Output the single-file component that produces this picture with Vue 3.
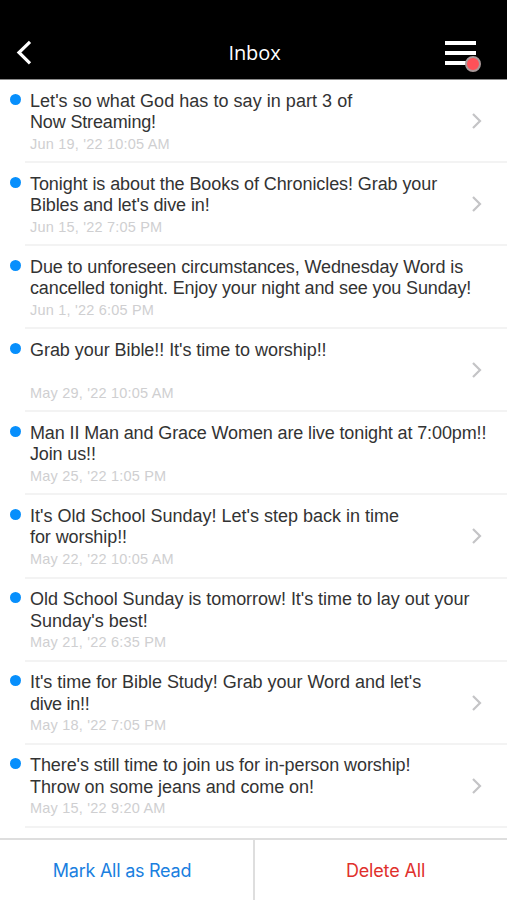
<script setup>
// each line is [text, tracking in px]
const messages = [
  { lines: [["Let's so what God has to say in part 3 of", 0.04], ['Now Streaming!', -0.15]], date: "Jun 19, '22 10:05 AM", link: true },
  { lines: [['Tonight is about the Books of Chronicles! Grab your', -0.08], ["Bibles and let's dive in!", -0.12]], date: "Jun 15, '22 7:05 PM", link: true },
  { lines: [['Due to unforeseen circumstances, Wednesday Word is', -0.11], ['cancelled tonight. Enjoy your night and see you Sunday!', -0.13]], date: "Jun 1, '22 6:05 PM", link: false },
  { lines: [["Grab your Bible!! It's time to worship!!", -0.05]], date: "May 29, '22 10:05 AM", link: true },
  { lines: [['Man II Man and Grace Women are live tonight at 7:00pm!!', -0.12], ['Join us!!', -0.13]], date: "May 25, '22 1:05 PM", link: false },
  { lines: [["It's Old School Sunday! Let's step back in time", 0], ['for worship!!', -0.08]], date: "May 22, '22 10:05 AM", link: true },
  { lines: [["Old School Sunday is tomorrow! It's time to lay out your", -0.04], ["Sunday's best!", 0.02]], date: "May 21, '22 6:35 PM", link: false },
  { lines: [["It's time for Bible Study! Grab your Word and let's", -0.03], ['dive in!!', -0.3]], date: "May 18, '22 7:05 PM", link: true },
  { lines: [["There's still time to join us for in-person worship!", -0.08], ['Throw on some jeans and come on!', -0.07]], date: "May 15, '22 9:20 AM", link: true },
];
</script>

<template>
  <div class="screen">
    <header class="header">
      <svg class="back" width="16" height="26" viewBox="0 0 16 26">
        <path d="M14 1.8L3 12.5L14 23.3" fill="none" stroke="#fff" stroke-width="3.2" />
      </svg>
      <h1>Inbox</h1>
      <div class="menu">
        <span></span>
        <span></span>
        <span></span>
        <i class="badge"></i>
      </div>
    </header>

    <ul class="list">
      <li v-for="message in messages" :key="message.date" class="item">
        <i class="unread"></i>
        <div class="body">
          <div class="text">
            <p v-for="[line, tracking] in message.lines" :key="line" :style="{ letterSpacing: tracking + 'px' }">{{ line }}</p>
          </div>
          <time>{{ message.date }}</time>
          <svg v-if="message.link" class="chevron" width="12" height="18" viewBox="0 0 12 18">
            <path d="M2 2L9 9L2 16" fill="none" stroke="#c4c4c6" stroke-width="2.2" />
          </svg>
        </div>
      </li>
    </ul>

    <footer class="footer">
      <button class="read">Mark All as Read</button>
      <button class="delete">Delete All</button>
    </footer>
  </div>
</template>

<style>
body {
  margin: 0;
  background: #fff;
}
</style>

<style scoped>
.screen {
  display: flex;
  flex-direction: column;
  width: 507px;
  height: 900px;
  overflow: hidden;
  background: #fff;
  font-family: "Liberation Sans", Arial, sans-serif;
}

.header {
  display: flex;
  flex: none;
  align-items: center;
  justify-content: space-between;
  box-sizing: border-box;
  height: 80px;
  padding: 26px 30px 0 16px;
  border-bottom: 1px solid #8a8a8a;
  background: #000;
}
.back {
  width: 16px;
  margin-right: 32px;
}
h1 {
  margin: 0;
  color: #fff;
  font: 400 20px/24px "Open Sans", sans-serif;
  letter-spacing: -0.1px;
}
.menu {
  position: relative;
  display: flex;
  flex-direction: column;
  gap: 6px;
  width: 32px;
}
.menu span {
  width: 31px;
  height: 4px;
  background: #fff;
}
.badge {
  position: absolute;
  top: 15px;
  left: 20px;
  box-sizing: border-box;
  width: 16px;
  height: 16px;
  border: 2px solid #a99;
  border-radius: 50%;
  background: #ff5158;
}

.list {
  flex: 1;
  min-height: 0;
  margin: 0;
  padding: 0;
  overflow: hidden;
  list-style: none;
}
.item {
  display: flex;
  height: 83.1px;
}
.unread {
  flex: none;
  width: 11px;
  height: 11px;
  margin: 13.5px 4px 0 10px;
  border-radius: 50%;
  background: #078ffc;
}
.body {
  position: relative;
  flex: 1;
  box-sizing: border-box;
  padding: 10.5px 0 0 5px;
  border-bottom: 2px solid #f3f3f3;
}
.text {
  height: 43px;
}
.text p {
  margin: 0;
  color: #333;
  font-size: 18px;
  line-height: 21.5px;
  white-space: nowrap;
}
time {
  display: block;
  color: #cfcfd1;
  font-size: 14.5px;
  letter-spacing: 0.2px;
  line-height: 21px;
}
.chevron {
  position: absolute;
  top: 32px;
  left: 446px;
}

.footer {
  display: flex;
  flex: none;
  box-sizing: border-box;
  height: 62px;
  border-top: 2px solid #dedede;
}
.footer button {
  flex: 1;
  padding: 1px 0 0;
  border: 0;
  background: #fff;
  font: 400 18px/22px Inter, Roboto, sans-serif;
  letter-spacing: -0.25px;
}
.footer .read {
  flex: none;
  box-sizing: border-box;
  width: 255px;
  padding-right: 9px;
  border-right: 2px solid #dedede;
  color: #1a7fe0;
}
.footer .delete {
  padding-left: 9px;
  color: #e0302c;
  letter-spacing: -0.15px;
}
</style>
